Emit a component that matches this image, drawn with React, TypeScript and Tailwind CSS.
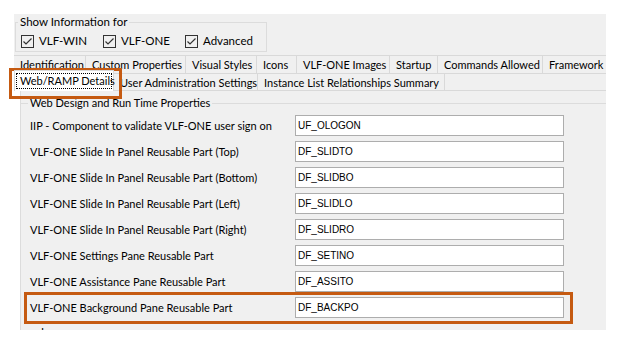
import React from 'react';

const tabsTop = [
  { label: 'Identification', w: 72 },
  { label: 'Custom Properties', w: 100 },
  { label: 'Visual Styles', w: 71 },
  { label: 'Icons', w: 40 },
  { label: 'VLF-ONE Images', w: 93 },
  { label: 'Startup', w: 48 },
  { label: 'Commands Allowed', w: 105 },
  { label: 'Framework Images', w: 100 },
];

const tabsBottom = [
  { label: 'User Administration Settings', w: 144 },
  { label: 'Instance List Relationships Summary', w: 187 },
];

const fields = [
  { label: 'IIP - Component to validate VLF-ONE user sign on', value: 'UF_OLOGON' },
  { label: 'VLF-ONE Slide In Panel Reusable Part (Top)', value: 'DF_SLIDTO' },
  { label: 'VLF-ONE Slide In Panel Reusable Part (Bottom)', value: 'DF_SLIDBO' },
  { label: 'VLF-ONE Slide In Panel Reusable Part (Left)', value: 'DF_SLIDLO' },
  { label: 'VLF-ONE Slide In Panel Reusable Part (Right)', value: 'DF_SLIDRO' },
  { label: 'VLF-ONE Settings Pane Reusable Part', value: 'DF_SETINO' },
  { label: 'VLF-ONE Assistance Pane Reusable Part', value: 'DF_ASSITO' },
  { label: 'VLF-ONE Background Pane Reusable Part', value: 'DF_BACKPO' },
];

const Check: React.FC<{ label: string; w: number }> = ({ label, w }) => (
  <div className="flex items-center" style={{ width: w }}>
    <div className="w-[13px] h-[13px] border border-[#333333] bg-[#f0f0f0] flex items-center justify-center">
      <svg width="11" height="11" viewBox="0 0 11 11">
        <path d="M1.5 5.5 L4 8 L9.5 2.5" fill="none" stroke="#333333" strokeWidth="1.2" />
      </svg>
    </div>
    <span className="ml-[5px]">{label}</span>
  </div>
);

export default function App() {
  return (
    <div className="relative w-[620px] h-[345px] bg-white overflow-hidden font-['Lato',sans-serif] text-[11px] text-black leading-[16px]">
      {/* options + tab strip */}
      <div className="ml-[14px] mt-[14px] w-[592px] bg-[#f0f0f0]">
        <fieldset className="ml-[1px] w-[252px] h-[38px] border border-[#dcdcdc]">
          <legend className="ml-[2px] px-[2px] text-[11.5px]">Show Information for</legend>
          <div className="flex items-center pl-[5px] mt-[3px] text-[11.5px]">
            <Check label="VLF-WIN" w={82} />
            <Check label="VLF-ONE" w={82} />
            <Check label="Advanced" w={80} />
          </div>
        </fieldset>

        <div className="mt-[3px] flex h-[18px] border-t border-[#d9d9d9] overflow-hidden whitespace-nowrap">
          {tabsTop.map((t) => (
            <div
              key={t.label}
              className="shrink-0 border-r border-[#d9d9d9] pl-[6px] leading-[18px] overflow-hidden"
              style={{ width: t.w }}
            >
              {t.label}
            </div>
          ))}
        </div>

        <div className="flex h-[18px] whitespace-nowrap relative">
          <div className="shrink-0 w-[100px] h-[21px] -mt-[3px] bg-white border border-b-0 border-[#d9d9d9] px-[1px] pt-[2px] relative z-10">
            <div className="border border-dotted border-black leading-[14px] pl-[3px]">Web/RAMP Details</div>
          </div>
          <div className="flex border-t border-b border-[#d9d9d9] flex-1">
            {tabsBottom.map((t) => (
              <div
                key={t.label}
                className="shrink-0 border-r border-[#d9d9d9] pl-[6px] leading-[17px]"
                style={{ width: t.w }}
              >
                {t.label}
              </div>
            ))}
          </div>
        </div>
      </div>

      {/* tab page */}
      <div className="ml-[20px] w-[586px] h-[239px] bg-[#f0f0f0] border-l border-[#dcdcdc] overflow-hidden">
        <fieldset className="mt-[4px] border-t border-[#dcdcdc]">
          <legend className="ml-[7px] px-[2px]">Web Design and Run Time Properties</legend>
          <div className="flex flex-col gap-[5px] pt-[4px]">
            {fields.map((f) => (
              <div key={f.value} className="flex items-center h-[21px]">
                <span className="w-[274px] pl-[9px] whitespace-nowrap">{f.label}</span>
                <div className="w-[269px] h-[21px] bg-white border border-[#adadad] pl-[2px] flex items-center font-['Liberation_Sans',sans-serif] text-[10px]">
                  {f.value}
                </div>
              </div>
            ))}
          </div>
        </fieldset>
        <div className="mt-[6px] ml-[20px]">Languages</div>
      </div>

      {/* highlight boxes */}
      <div className="absolute left-[9px] top-[68px] w-[113px] h-[31px] border-[3px] border-[#c55a11]" />
      <div className="absolute left-[24px] top-[292px] w-[549px] h-[32px] border-[3px] border-[#c55a11]" />
    </div>
  );
}
